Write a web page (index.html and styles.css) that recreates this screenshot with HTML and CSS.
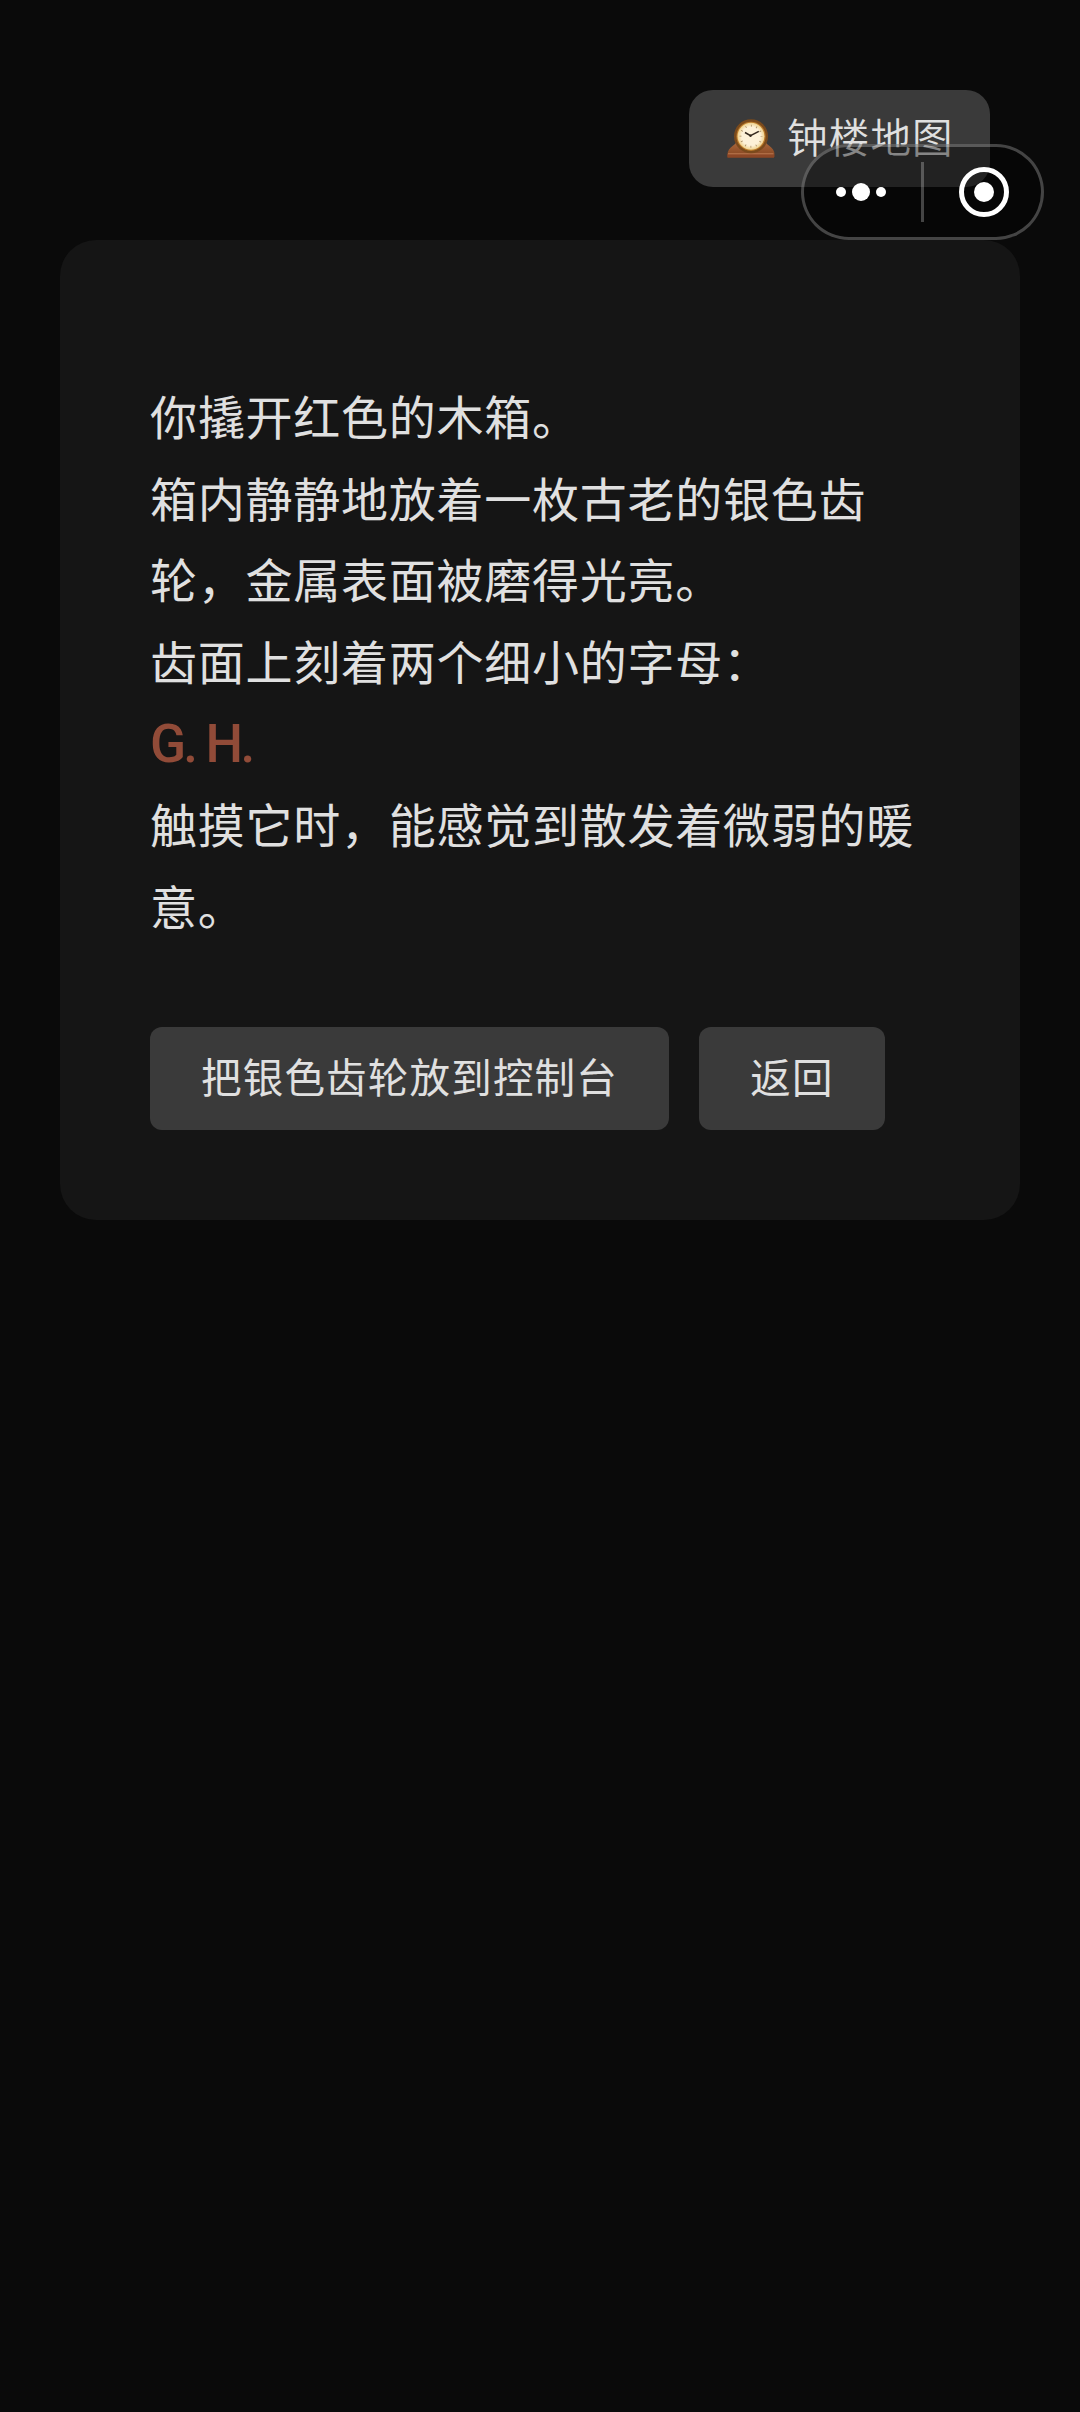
FILE: index.html
```
<!DOCTYPE html>
<html lang="zh-CN">
<head>
<meta charset="utf-8">
<title>钟楼地图</title>
<link rel="stylesheet" href="styles.css">
</head>
<body>
<header class="topbar">
  <button class="map-button">
    <svg class="clock" viewBox="0 0 48 40" aria-hidden="true">
      <defs>
        <linearGradient id="wood" x1="0" y1="0" x2="0" y2="1"><stop offset="0" stop-color="#a9683d"/><stop offset="1" stop-color="#84431f"/></linearGradient>
        <radialGradient id="face"><stop offset=".7" stop-color="#fdf1d8"/><stop offset="1" stop-color="#efd28e"/></radialGradient>
      </defs>
      <path d="M0.500 38v-3q.5-5 5-8 3-2 4-4h29q1 2 4 4 4.500 3 5 8v3z" fill="url(#wood)"/>
      <path d="M0.500 35h46.500v3.800h-46.500z" fill="#8c4726"/>
      <path d="M1 34.800h45.500" stroke="#bd7b52" stroke-width="1"/>
      <circle cx="24" cy="17.300" r="17" fill="#7a4a1c"/>
      <circle cx="24" cy="17.300" r="14.600" fill="#b9792a"/>
      <circle cx="24" cy="17.300" r="13.500" fill="url(#face)"/>
      <circle cx="24" cy="17.300" r="10.500" fill="none" stroke="#a98d62" stroke-width="2" stroke-dasharray=".8 4.698" stroke-dashoffset=".4"/>
      <path d="M18 13.500l5.500 3.200 8.300-4.400" fill="none" stroke="#33271d" stroke-width="1.500"/>
      <circle cx="23.500" cy="16.700" r="1.200" fill="#33271d"/>
    </svg>
    <span>钟楼地图</span>
  </button>
</header>

<main class="card">
  <div class="story">
    <p>你撬开红色的木箱。</p>
    <p>箱内静静地放着一枚古老的银色齿轮，金属表面被磨得光亮。</p>
    <p>齿面上刻着两个细小的字母：</p>
    <p class="initials">G. H.</p>
    <p>触摸它时，能感觉到散发着微弱的暖意。</p>
  </div>
  <div class="actions">
    <button class="action">把银色齿轮放到控制台</button>
    <button class="action">返回</button>
  </div>
</main>

<div class="capsule">
  <svg class="more" viewBox="0 0 50 18" aria-label="更多"><circle cx="5" cy="9" r="5"/><circle cx="25" cy="9" r="9"/><circle cx="45" cy="9" r="5"/></svg>
  <span class="divider"></span>
  <svg class="close" viewBox="0 0 50 50" aria-label="关闭"><circle class="ring" cx="25" cy="25" r="22.500"/><circle cx="25" cy="25" r="10"/></svg>
</div>
</body>
</html>
```
FILE: styles.css
```
* {
  box-sizing: border-box;
  margin: 0;
}

body {
  min-height: 2412px;
  padding: 90px 60px 0;
  background: #0a0a0a;
  color: #e0e0e0;
  font-family: "Noto Sans CJK SC", sans-serif;
}

button {
  border: 0;
  background: #3a3a3a;
  color: #e0e0e0;
  font: inherit;
  white-space: nowrap;
}

.topbar {
  display: flex;
  justify-content: flex-end;
  height: 150px;
  padding-right: 30px;
}

.map-button {
  display: flex;
  align-items: center;
  width: 301px;
  height: 97px;
  padding: 0 0 0 38px;
  border-radius: 24px;
  font-size: 40.500px;
  font-weight: 350;
  line-height: 60px;
  letter-spacing: 1.200px;
}

.map-button span {
  margin-left: 12px;
  padding-bottom: 6px;
}

.clock {
  width: 48px;
  height: 40px;
}

.card {
  height: 980px;
  padding: 134px 90px 0;
  border-radius: 36px;
  background: #151515;
}

.story {
  width: 780px;
  font-size: 47px;
  line-height: 81.600px;
  letter-spacing: 0.750px;
}

.initials {
  height: 81.600px;
  padding-top: 4px;
  color: #914b38;
  font-family: Roboto, sans-serif;
  font-size: 53px;
  font-weight: 500;
  letter-spacing: -2.800px;
}

.actions {
  display: flex;
  gap: 30px;
  margin-top: 82px;
}

.action {
  height: 103px;
  padding: 0 51px 5px;
  border-radius: 12px;
  font-size: 40.500px;
  line-height: 60px;
  letter-spacing: 1.200px;
}

.action:last-child {
  width: 186px;
}

.capsule {
  position: absolute;
  top: 144px;
  left: 801px;
  display: flex;
  align-items: center;
  width: 243px;
  height: 96px;
  padding-left: 32px;
  border: 3px solid rgba(255, 255, 255, 0.250);
  border-radius: 48px;
  background: rgba(0, 0, 0, 0.400);
}

.capsule svg {
  fill: #fff;
}

.more {
  width: 50px;
  height: 18px;
}

.divider {
  width: 3px;
  height: 60px;
  margin: 0 35px;
  background: rgba(255, 255, 255, 0.250);
}

.close {
  width: 50px;
  height: 50px;
}

.close .ring {
  fill: none;
  stroke: #fff;
  stroke-width: 5;
}
```
